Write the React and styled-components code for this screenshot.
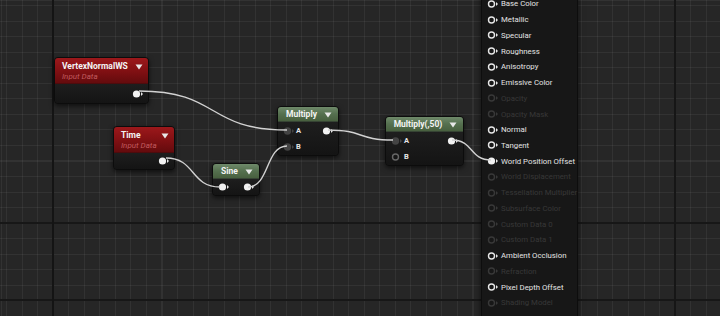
import React from 'react'
import styled, { createGlobalStyle, css } from 'styled-components'

const GlobalStyle = createGlobalStyle`
    html, body {
        margin: 0;
        padding: 0;
        background: #262626;
    }
    body {
        font-family: Roboto, 'Liberation Sans', sans-serif;
        overflow: hidden;
    }
`

// pin positions on the canvas, used by the wires
const wires = [
    { from: [139, 91], to: [287, 130] },
    { from: [166, 158], to: [220, 187] },
    { from: [248, 187], to: [287, 146] },
    { from: [328, 130], to: [393, 140] },
    { from: [452, 140], to: [491, 160] },
]

const outputs = [
    { label: 'Base Color' },
    { label: 'Metallic' },
    { label: 'Specular' },
    { label: 'Roughness' },
    { label: 'Anisotropy' },
    { label: 'Emissive Color' },
    { label: 'Opacity', off: true },
    { label: 'Opacity Mask', off: true },
    { label: 'Normal' },
    { label: 'Tangent' },
    { label: 'World Position Offset', linked: true },
    { label: 'World Displacement', off: true },
    { label: 'Tessellation Multiplier', off: true },
    { label: 'Subsurface Color', off: true },
    { label: 'Custom Data 0', off: true },
    { label: 'Custom Data 1', off: true },
    { label: 'Ambient Occlusion' },
    { label: 'Refraction', off: true },
    { label: 'Pixel Depth Offset' },
    { label: 'Shading Model', off: true },
]

const wirePath = ([x1, y1], [x2, y2]) => {
    const d = Math.max(20, (x2 - x1) * 0.55)
    return `M${x1} ${y1} C${x1 + d} ${y1}, ${x2 - d} ${y2}, ${x2} ${y2}`
}

const Pin = ({ kind = 'out', dim }) => {
    // kind: out (white filled), open (hollow), socket (dark filled), ring (hollow gray)
    const fill = kind === 'out' ? '#f2f2f2' : kind === 'socket' ? '#444' : 'none'
    const stroke = kind === 'ring' ? '#666' : kind === 'socket' ? '#444' : kind === 'open' ? (dim ? '#383838' : '#e6e6e6') : '#f2f2f2'
    const arrow = kind === 'socket' ? '#444' : kind === 'ring' ? 'none' : dim ? '#383838' : '#e6e6e6'
    return (
        <PinIcon width="12" height="10" viewBox="0 0 12 10">
            <circle cx="4.5" cy="5" r={kind === 'out' ? 3.6 : 3} fill={fill} stroke={stroke} strokeWidth={kind === 'out' ? 0 : 1.4} />
            <path d="M9 3 L11 5 L9 7 Z" fill={arrow} />
        </PinIcon>
    )
}

const Caret = () => (
    <CaretIcon width="8" height="6" viewBox="0 0 8 6">
        <path d="M0.5 0.5 H7.5 L4 5.5 Z" fill="#e8e8e8" />
    </CaretIcon>
)

const App = () => {
    return (
        <>
            <GlobalStyle />
            <Canvas>
                <Wires width="720" height="316">
                    {wires.map((w, i) => (
                        <path key={i} d={wirePath(w.from, w.to)} />
                    ))}
                </Wires>

                <Node style={{ left: 54, top: 57, width: 93 }}>
                    <Header $tone="red" $tall>
                        <Titles>
                            <Title>VertexNormalWS</Title>
                            <Sub>Input Data</Sub>
                        </Titles>
                        <Caret />
                    </Header>
                    <Body $h={19}>
                        <OutRow><Pin kind="out" /></OutRow>
                    </Body>
                </Node>

                <Node style={{ left: 113, top: 126, width: 60 }}>
                    <Header $tone="red" $tall>
                        <Titles>
                            <Title>Time</Title>
                            <Sub>Input Data</Sub>
                        </Titles>
                        <Caret />
                    </Header>
                    <Body $h={16}>
                        <OutRow><Pin kind="out" /></OutRow>
                    </Body>
                </Node>

                <Node style={{ left: 212, top: 163, width: 46 }}>
                    <Header $tone="green">
                        <Title>Sine</Title>
                        <Caret />
                    </Header>
                    <Body $h={16}>
                        <PinRow>
                            <Pin kind="out" />
                            <Pin kind="out" />
                        </PinRow>
                    </Body>
                </Node>

                <Node style={{ left: 277, top: 106, width: 60 }}>
                    <Header $tone="green">
                        <Title>Multiply</Title>
                        <Caret />
                    </Header>
                    <Body $h={33}>
                        <PinRow>
                            <Input><Pin kind="socket" />A</Input>
                            <Pin kind="out" />
                        </PinRow>
                        <PinRow>
                            <Input><Pin kind="socket" />B</Input>
                        </PinRow>
                    </Body>
                </Node>

                <Node style={{ left: 385, top: 116, width: 77 }}>
                    <Header $tone="green">
                        <Title>Multiply(,50)</Title>
                        <Caret />
                    </Header>
                    <Body $h={33}>
                        <PinRow>
                            <Input><Pin kind="socket" />A</Input>
                            <Pin kind="out" />
                        </PinRow>
                        <PinRow>
                            <Input><Pin kind="ring" />B</Input>
                        </PinRow>
                    </Body>
                </Node>

                <Result>
                    {outputs.map((o) => (
                        <ResultRow key={o.label} $off={o.off} $linked={o.linked}>
                            <Pin kind={o.linked ? 'out' : 'open'} dim={o.off} />
                            <span>{o.label}</span>
                        </ResultRow>
                    ))}
                </Result>
            </Canvas>
        </>
    )
}

export default App

const Canvas = styled.div`
    position: relative;
    width: 720px;
    height: 316px;
    overflow: hidden;
    background-color: #262626;
    background-image:
        linear-gradient(90deg, transparent 52px, #141414 52px, #141414 54px, transparent 54px),
        linear-gradient(90deg, transparent 674px, #161616 674px, #161616 676px, transparent 676px),
        linear-gradient(180deg, transparent 222px, #171717 222px, #171717 224px, transparent 224px),
        linear-gradient(180deg, transparent 299px, #171717 299px, #171717 301px, transparent 301px),
        repeating-linear-gradient(90deg, rgba(255, 255, 255, 0.055) 0 1px, transparent 1px 15.55px),
        repeating-linear-gradient(180deg, rgba(255, 255, 255, 0.055) 0 1px, transparent 1px 15.55px);
    background-position: 0 0, 0 0, 0 0, 0 0, 6px 0, 0 5px;
`

const Wires = styled.svg`
    position: absolute;
    left: 0;
    top: 0;
    pointer-events: none;
    z-index: 2;

    path {
        fill: none;
        stroke: #d2d2d2;
        stroke-width: 1.4;
    }
`

const Node = styled.div`
    position: absolute;
    z-index: 1;
    display: flex;
    flex-direction: column;
    background: #171717;
    border: 1px solid #0c0c0c;
    border-radius: 4px;
    box-shadow: 0 2px 5px rgba(0, 0, 0, 0.6);
    overflow: hidden;
`

const Header = styled.div`
    display: flex;
    align-items: flex-start;
    justify-content: space-between;
    padding: ${p => (p.$tall ? '3px 5px 2px 7px' : '2px 5px 2px 7px')};
    border-bottom: 1px solid rgba(0, 0, 0, 0.5);
    ${p => p.$tone === 'red' && css`
        background: linear-gradient(180deg, #9c181b 0%, #851114 45%, #640b0d 100%);
    `}
    ${p => p.$tone === 'green' && css`
        background: linear-gradient(180deg, #6f8a6a 0%, #55704f 50%, #48603f 100%);
        justify-content: center;
        gap: 7px;
    `}
`

const Titles = styled.div`
    display: flex;
    flex-direction: column;
    gap: 1px;
`

const Title = styled.div`
    color: #f4f4f4;
    font-size: 8.5px;
    font-weight: 700;
    line-height: 10px;
    white-space: nowrap;
`

const Sub = styled.div`
    color: #c25a5e;
    font-size: 8px;
    font-style: italic;
    line-height: 9px;
`

const CaretIcon = styled.svg`
    margin-top: 3px;
    flex: none;
`

const Body = styled.div`
    height: ${p => p.$h}px;
    display: flex;
    flex-direction: column;
    justify-content: center;
    gap: 5px;
    padding: 0 4px 0 5px;
    background: linear-gradient(180deg, #1e1e1e, #141414);
`

const OutRow = styled.div`
    display: flex;
    justify-content: flex-end;
`

const PinRow = styled.div`
    display: flex;
    align-items: center;
    justify-content: space-between;
    height: 11px;
`

const Input = styled.div`
    display: flex;
    align-items: center;
    gap: 1px;
    color: #e8e8e8;
    font-size: 7.5px;
    font-weight: 700;
`

const PinIcon = styled.svg`
    flex: none;
    display: block;
`

const Result = styled.div`
    position: absolute;
    left: 481px;
    top: -7px;
    width: 97px;
    height: 330px;
    z-index: 1;
    display: flex;
    flex-direction: column;
    padding: 3px 0 0 5px;
    box-sizing: border-box;
    background: #171717;
    border-left: 1px solid #0d0d0d;
    border-right: 1px solid #0d0d0d;
    box-shadow: 0 0 6px rgba(0, 0, 0, 0.6);
`

const ResultRow = styled.div`
    display: flex;
    align-items: center;
    gap: 2px;
    height: 15.74px;
    font-size: 7.8px;
    font-weight: 400;
    white-space: nowrap;
    color: ${p => (p.$off ? '#383838' : '#e4e4e4')};
`
